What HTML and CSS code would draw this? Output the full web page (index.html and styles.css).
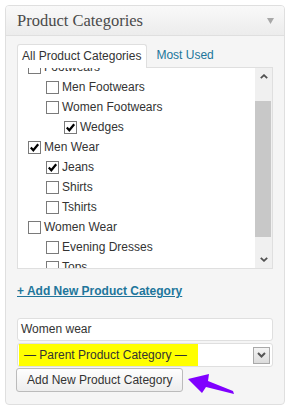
FILE: index.html
```html
<!DOCTYPE html>
<html>
<head>
<meta charset="utf-8">
<link rel="stylesheet" href="styles.css">
</head>
<body>
<div class="postbox">
  <div class="hndle">
    <h3>Product Categories</h3>
    <svg class="toggle" width="7" height="6" viewBox="0 0 7 6"><polygon points="0,0 7,0 3.5,6" fill="#a8a8a8"/></svg>
  </div>
  <div class="inside">
    <div class="tabs">
      <span class="tab active">All Product Categories</span>
      <span class="tab other">Most Used</span>
    </div>
    <div class="panel">
      <ul class="checklist">
        <li class="l0 first"><span class="cb"></span><span class="lbl">Footwears</span></li>
        <li class="l1"><span class="cb"></span><span class="lbl">Men Footwears</span></li>
        <li class="l1"><span class="cb"></span><span class="lbl">Women Footwears</span></li>
        <li class="l2"><span class="cb"><svg width="11" height="11" viewBox="0 0 11 11"><polyline points="1.8,5.6 4.3,8.3 9.2,2.2" fill="none" stroke="#000" stroke-width="2.2"/></svg></span><span class="lbl">Wedges</span></li>
        <li class="l0"><span class="cb"><svg width="11" height="11" viewBox="0 0 11 11"><polyline points="1.8,5.6 4.3,8.3 9.2,2.2" fill="none" stroke="#000" stroke-width="2.2"/></svg></span><span class="lbl">Men Wear</span></li>
        <li class="l1"><span class="cb"><svg width="11" height="11" viewBox="0 0 11 11"><polyline points="1.8,5.6 4.3,8.3 9.2,2.2" fill="none" stroke="#000" stroke-width="2.2"/></svg></span><span class="lbl">Jeans</span></li>
        <li class="l1"><span class="cb"></span><span class="lbl">Shirts</span></li>
        <li class="l1"><span class="cb"></span><span class="lbl">Tshirts</span></li>
        <li class="l0"><span class="cb"></span><span class="lbl">Women Wear</span></li>
        <li class="l1"><span class="cb"></span><span class="lbl">Evening Dresses</span></li>
        <li class="l1"><span class="cb"></span><span class="lbl">Tops</span></li>
      </ul>
      <div class="scrollbar">
        <div class="sb-btn"><svg width="8" height="5" viewBox="0 0 8 5"><polyline points="0.8,4.2 4,1.2 7.2,4.2" fill="none" stroke="#505050" stroke-width="1.8"/></svg></div>
        <div class="sb-gap"></div>
        <div class="sb-thumb"></div>
        <div class="sb-rest"></div>
        <div class="sb-btn"><svg width="8" height="5" viewBox="0 0 8 5"><polyline points="0.8,0.8 4,3.8 7.2,0.8" fill="none" stroke="#505050" stroke-width="1.8"/></svg></div>
      </div>
    </div>
    <a class="add-link" href="#">+ Add New Product Category</a>
    <div class="text-input">Women wear</div>
    <div class="select">
      <span class="sel-text">— Parent Product Category —</span>
      <span class="sel-btn"><svg width="9" height="6" viewBox="0 0 9 6"><polyline points="1,1 4.5,4.5 8,1" fill="none" stroke="#555" stroke-width="2"/></svg></span>
    </div>
    <div class="btn-row"><span class="button">Add New Product Category</span></div>
  </div>
  <svg class="annot" width="60" height="30" viewBox="0 0 60 30"><polygon points="7,10 28,5 27,12 52,22 53,25 25,18 21,24" fill="#8000ff"/></svg>
</div>
</body>
</html>
```
FILE: styles.css
```css
body {
  margin: 0;
  background: #fff;
  font-family: "Liberation Sans", Arial, sans-serif;
  font-size: 12px;
  color: #333;
}

.postbox {
  position: relative;
  margin: 5px 0 0 5px;
  width: 280px;
  height: 400px;
  box-sizing: border-box;
  border: 1px solid #dfdfdf;
  border-radius: 4px;
  background: #f5f5f5;
}

.hndle {
  height: 30px;
  box-sizing: border-box;
  border-bottom: 1px solid #dfdfdf;
  background: linear-gradient(#f9f9f9, #ececec);
  border-radius: 3px 3px 0 0;
  display: flex;
  align-items: center;
  justify-content: space-between;
  padding: 0 10px 0 11px;
}

.hndle h3 {
  margin: 0;
  font-family: "Liberation Serif", Georgia, serif;
  font-size: 16.5px;
  font-weight: normal;
  color: #4a4a4a;
}

.inside {
  padding: 8px 11px 0 11px;
}

.tabs {
  display: flex;
  height: 23px;
}

.tab {
  height: 24px;
  box-sizing: border-box;
  line-height: 23px;
  white-space: nowrap;
}

.tab.active {
  position: relative;
  z-index: 1;
  background: #fff;
  border: 1px solid #dfdfdf;
  border-bottom: none;
  border-radius: 3px 3px 0 0;
  padding: 0 5px 0 4px;
  color: #333;
}

.tab.other {
  padding-left: 9px;
  color: #21759b;
}

.panel {
  height: 202px;
  box-sizing: border-box;
  border: 1px solid #dfdfdf;
  background: #fff;
  display: flex;
}

.checklist {
  flex: 1;
  margin: 0;
  padding: 0;
  list-style: none;
  overflow: hidden;
}

.checklist li {
  height: 20px;
  display: flex;
  align-items: flex-start;
  white-space: nowrap;
}

.checklist li.first {
  margin-top: -11px;
}

.l0 { padding-left: 10px; }
.l1 { padding-left: 28px; }
.l2 { padding-left: 46px; }

.cb {
  flex: none;
  width: 11px;
  height: 11px;
  margin-top: 4px;
  margin-right: 3px;
  border: 1px solid #7a7a7a;
  background: #fff;
  display: flex;
}

.lbl {
  line-height: 20px;
  color: #333;
}

.scrollbar {
  flex: none;
  width: 17px;
  background: #f0f0f0;
  display: flex;
  flex-direction: column;
}

.sb-btn {
  height: 17px;
  display: flex;
  align-items: center;
  justify-content: center;
}

.sb-gap { height: 16px; }

.sb-thumb {
  height: 136px;
  margin-right: 1px;
  background: #c8c8c8;
}

.sb-rest { flex: 1; }

.add-link {
  display: block;
  margin-top: 14px;
  line-height: 16px;
  font-weight: bold;
  color: #21759b;
  text-decoration: underline;
  white-space: nowrap;
}

.text-input {
  margin-top: 19px;
  height: 23px;
  box-sizing: border-box;
  border: 1px solid #dfdfdf;
  border-radius: 3px;
  background: #fff;
  padding-left: 3px;
  line-height: 21px;
  color: #333;
}

.select {
  margin-top: 2px;
  height: 24px;
  box-sizing: border-box;
  border: 1px solid #dfdfdf;
  border-radius: 3px;
  background: #fff;
  padding: 0 1px;
  display: flex;
  align-items: center;
  justify-content: space-between;
}

.sel-text {
  align-self: stretch;
  background: #ffff00;
  padding: 0 11px 0 5px;
  line-height: 22px;
  color: #333;
  white-space: nowrap;
}

.sel-btn {
  width: 17px;
  height: 17px;
  box-sizing: border-box;
  margin-right: 1px;
  border: 1px solid #a9a9a9;
  background: linear-gradient(#f4f4f4, #dcdcdc);
  display: flex;
  align-items: center;
  justify-content: center;
}

.btn-row {
  margin-top: 1px;
  margin-left: -1px;
  display: flex;
}

.button {
  height: 24px;
  box-sizing: border-box;
  border: 1px solid #bbb;
  border-radius: 3px;
  background: linear-gradient(#fefefe, #ededed);
  padding: 0 10px;
  line-height: 22px;
  color: #333;
  white-space: nowrap;
}

.annot {
  position: absolute;
  left: 175px;
  top: 363px;
}
```
